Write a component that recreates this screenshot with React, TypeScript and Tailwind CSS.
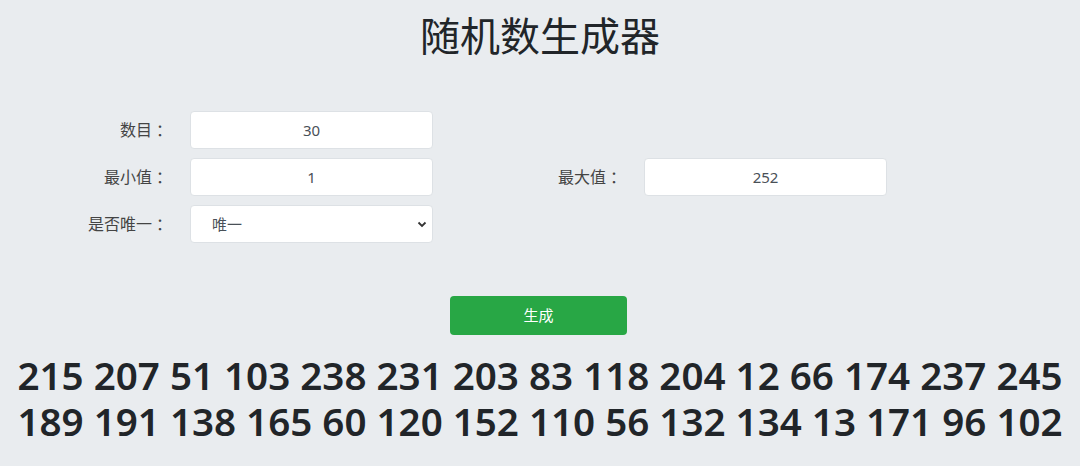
import React from "react";

const font = { fontFamily: '"Noto Sans", "Noto Sans CJK SC", sans-serif' };

const nums1 = "215 207 51 103 238 231 203 83 118 204 12 66 174 237 245";
const nums2 = "189 191 138 165 60 120 152 110 56 132 134 13 171 96 102";

function Colon() {
  return <span className="font-['Noto_Sans_CJK_JP'] leading-[20px]">：</span>;
}

const labelCls = "h-[38px] flex items-center justify-end text-[#444] leading-[20px]";
const inputCls =
  "h-[38px] bg-white border border-[#dde1e5] rounded-[4px] text-center text-[#495057] text-[15px] outline-none";

export default function App() {
  return (
    <div
      className="w-[1080px] h-[466px] bg-[#e9ecef] overflow-hidden"
      style={font}
    >
      <h1 className="text-center text-[40px] leading-[48px] font-normal text-[#212529] pt-[12px]">
        随机数生成器
      </h1>
      <div className="mt-[51px] grid grid-cols-[168px_243px_167px_243px] gap-x-[22px] gap-y-[9px] text-[16px]">
        <label className={labelCls}>数目<Colon /></label>
        <input readOnly value="30" className={inputCls} />
        <div />
        <div />
        <label className={labelCls}>最小值<Colon /></label>
        <input readOnly value="1" className={inputCls} />
        <label className={labelCls}>最大值<Colon /></label>
        <input readOnly value="252" className={inputCls} />
        <label className={labelCls}>是否唯一<Colon /></label>
        <div className="relative h-[38px] bg-white border border-[#dde1e5] rounded-[4px] flex items-center pl-[21px] text-[#495057] text-[15px]">
          唯一
          <svg
            className="absolute right-[5px] top-[15px]"
            width="10"
            height="7"
            viewBox="0 0 10 7"
          >
            <path d="M1.5 1.5 L5 5 L8.5 1.5" stroke="#333" strokeWidth="1.8" fill="none" />
          </svg>
        </div>
        <div />
        <div />
      </div>
      <div className="flex justify-center mt-[53px]">
        <button className="w-[177px] h-[39px] bg-[#28a745] text-white text-[15px] rounded-[4px] ml-[-3px]">
          生成
        </button>
      </div>
      <div className="mt-[17px] text-center whitespace-nowrap text-[#212529] font-semibold text-[38.6px] leading-[46px]">
        <div>{nums1}</div>
        <div>{nums2}</div>
      </div>
    </div>
  );
}
